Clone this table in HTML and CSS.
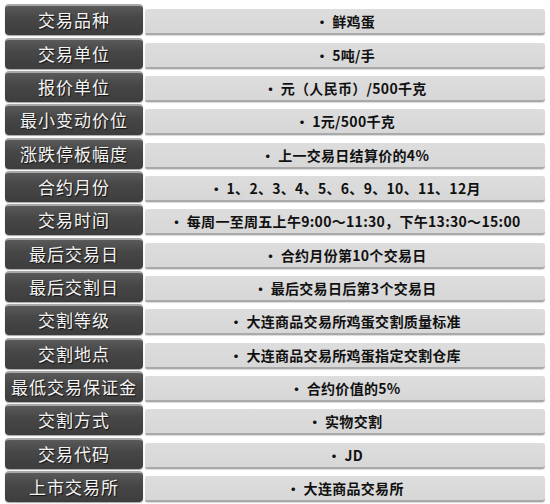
FILE: index.html
```html
<!DOCTYPE html>
<html lang="zh">
<head>
<meta charset="utf-8">
<link rel="stylesheet" href="styles.css">
</head>
<body>
<div class="table">
  <div class="row"><div class="label">交易品种</div><div class="value"><span class="dot">•</span>鲜鸡蛋</div></div>
  <div class="row"><div class="label">交易单位</div><div class="value"><span class="dot">•</span>5吨/手</div></div>
  <div class="row"><div class="label">报价单位</div><div class="value"><span class="dot">•</span>元（人民币）/500千克</div></div>
  <div class="row"><div class="label">最小变动价位</div><div class="value"><span class="dot">•</span>1元/500千克</div></div>
  <div class="row"><div class="label">涨跌停板幅度</div><div class="value"><span class="dot">•</span>上一交易日结算价的4%</div></div>
  <div class="row"><div class="label">合约月份</div><div class="value"><span class="dot">•</span>1、2、3、4、5、6、9、10、11、12月</div></div>
  <div class="row"><div class="label">交易时间</div><div class="value"><span class="dot">•</span>每周一至周五上午9:00～11:30，下午13:30～15:00</div></div>
  <div class="row"><div class="label">最后交易日</div><div class="value"><span class="dot">•</span>合约月份第10个交易日</div></div>
  <div class="row"><div class="label">最后交割日</div><div class="value"><span class="dot">•</span>最后交易日后第3个交易日</div></div>
  <div class="row"><div class="label">交割等级</div><div class="value"><span class="dot">•</span>大连商品交易所鸡蛋交割质量标准</div></div>
  <div class="row"><div class="label">交割地点</div><div class="value"><span class="dot">•</span>大连商品交易所鸡蛋指定交割仓库</div></div>
  <div class="row"><div class="label">最低交易保证金</div><div class="value"><span class="dot">•</span>合约价值的5%</div></div>
  <div class="row"><div class="label">交割方式</div><div class="value"><span class="dot">•</span>实物交割</div></div>
  <div class="row"><div class="label">交易代码</div><div class="value"><span class="dot">•</span>JD</div></div>
  <div class="row"><div class="label">上市交易所</div><div class="value"><span class="dot">•</span>大连商品交易所</div></div>
</div>
</body>
</html>
```
FILE: styles.css
```css
html, body {
  margin: 0;
  padding: 0;
  background: #ffffff;
}
body {
  width: 550px;
  height: 504px;
  overflow: hidden;
  font-family: "Noto Sans CJK SC", "Liberation Sans", sans-serif;
}
.table {
  display: flex;
  flex-direction: column;
  gap: 2px;
  padding: 4px 5px 0 5px;
}
.row {
  display: flex;
  align-items: flex-end;
  gap: 2px;
  height: 31.33px;
}
.label {
  width: 138px;
  height: 31px;
  box-sizing: border-box;
  border-radius: 4px;
  border-top: 2px solid #a8a8a8;
  background: linear-gradient(#5a5a5a, #474747 40%, #3d3d3d);
  box-shadow: 0 1px 1px rgba(0,0,0,0.35);
  color: #f4f4f4;
  font-size: 17px;
  line-height: 28px;
  text-align: center;
  letter-spacing: 1px;
  text-shadow: 1px 1px 1px #111;
}
.value {
  flex: 1;
  height: 26px;
  box-sizing: border-box;
  border-radius: 2px 3px 3px 2px;
  background: linear-gradient(#dddddd, #d7d7d7);
  border-bottom: 2px solid #a9a9a9;
  box-shadow: 0 1px 1px rgba(0,0,0,0.15);
  color: #111;
  font-size: 14px;
  font-weight: bold;
  line-height: 24px;
  text-align: center;
  letter-spacing: 0.3px;
}
.dot {
  margin-right: 3px;
}
```
